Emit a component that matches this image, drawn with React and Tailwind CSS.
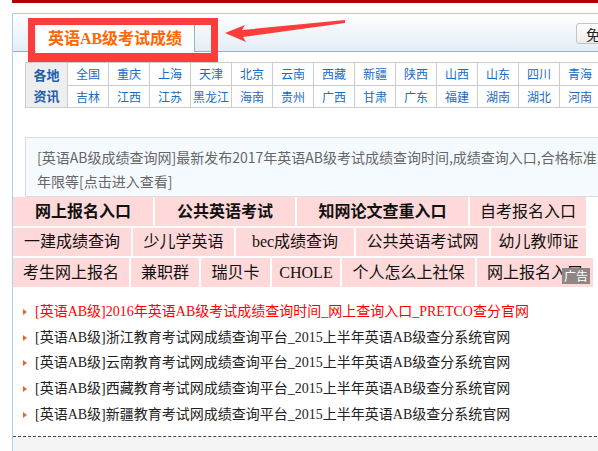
import React from "react";

const regionsTop = ["全国","重庆","上海","天津","北京","云南","西藏","新疆","陕西","山西","山东","四川","青海"];
const regionsBot = ["吉林","江西","江苏","黑龙江","海南","贵州","广西","甘肃","广东","福建","湖南","湖北","河南"];

const pinkRows = [
  { h: "h-[29px]", items: [
    { t: "网上报名入口", w: "w-[140px]", b: true },
    { t: "公共英语考试", w: "w-[140px]", b: true },
    { t: "知网论文查重入口", w: "w-[171px]", b: true },
    { t: "自考报名入口", w: "w-[116px]" },
  ]},
  { h: "h-[28px]", items: [
    { t: "一建成绩查询", w: "w-[118px]" },
    { t: "少儿学英语", w: "w-[101px]" },
    { t: "bec成绩查询", w: "w-[118px]" },
    { t: "公共英语考试网", w: "w-[133px]" },
    { t: "幼儿教师证", w: "w-[95px]" },
  ]},
  { h: "h-[29px]", items: [
    { t: "考生网上报名", w: "w-[116px]" },
    { t: "兼职群", w: "w-[68px]" },
    { t: "瑞贝卡", w: "w-[69px]" },
    { t: "CHOLE", w: "w-[68px]" },
    { t: "个人怎么上社保", w: "w-[133px]" },
    { t: "网上报名入口", w: "w-[116px]", ad: true },
  ]},
];

const listItems = [
  { t: "[英语AB级]2016年英语AB级考试成绩查询时间_网上查询入口_PRETCO查分官网", red: true },
  { t: "[英语AB级]浙江教育考试网成绩查询平台_2015上半年英语AB级查分系统官网" },
  { t: "[英语AB级]云南教育考试网成绩查询平台_2015上半年英语AB级查分系统官网" },
  { t: "[英语AB级]西藏教育考试网成绩查询平台_2015上半年英语AB级查分系统官网" },
  { t: "[英语AB级]新疆教育考试网成绩查询平台_2015上半年英语AB级查分系统官网" },
];

export default function App() {
  return (
    <div className="relative w-[598px] h-[451px] overflow-hidden bg-white font-['Liberation_Serif','Noto_Sans_CJK_SC',serif]">
      <div className="ml-[12px] h-[3px] bg-[#b40000]" />
      <div className="mt-[10px] ml-[12px] w-[640px] h-[438px] border-l border-t border-[#a9d0ef] flex flex-col">
        {/* header */}
        <div className="h-[38px] shrink-0 flex items-end border-b border-[#80b9dd] bg-gradient-to-b from-white to-[#e3ecf6]">
          <div className="ml-[23px] -mb-px h-[28px] w-[161px] bg-white border-t border-r border-[#80b9dd] flex items-center justify-center text-[16px] font-bold text-[#ff6600] leading-none">
            英语AB级考试成绩
          </div>
          <div className="ml-[381px] mb-[7px] h-[21px] px-[9px] flex items-center rounded-[3px] border border-[#c4c4c4] bg-gradient-to-b from-white to-[#ececec] text-[14px] text-[#222] font-['Noto_Sans_CJK_SC',sans-serif] leading-none whitespace-nowrap">
            免费查询
          </div>
        </div>

        {/* region grid */}
        <div className="ml-[12px] mt-[10px] w-max grid grid-cols-[42px_repeat(13,41px)] grid-rows-[23px_22px] border-l border-t border-[#cccccc] font-['Noto_Sans_CJK_SC',sans-serif]">
          <div className="row-span-2 bg-[#eeeeee] border-r border-b border-[#cccccc] flex flex-col items-center justify-around py-[1px] text-[13px] font-bold text-[#1c5fae] leading-none">
            <span>各地</span>
            <span>资讯</span>
          </div>
          {regionsTop.map((r) => (
            <div key={r} className="border-r border-b border-[#cccccc] flex items-center justify-center text-[12px] text-[#1a6bc4] leading-none">{r}</div>
          ))}
          {regionsBot.map((r) => (
            <div key={r} className="border-r border-b border-[#cccccc] flex items-center justify-center text-[12px] text-[#1a6bc4] leading-none whitespace-nowrap">{r}</div>
          ))}
        </div>

        {/* notice */}
        <div className="ml-[12px] mt-[29px] w-[700px] h-[60px] shrink-0 border border-[#dcdcdc] bg-[#f5faff] pl-[11px] pt-[7px] text-[14px] leading-[24px] text-[#666] font-['Noto_Sans_CJK_SC',sans-serif] whitespace-nowrap">
          [英语AB级成绩查询网]最新发布2017年英语AB级考试成绩查询时间,成绩查询入口,合格标准
          <br />
          年限等[点击进入查看]
        </div>

        {/* pink links */}
        <div className="flex flex-col gap-[2px]">
          {pinkRows.map((row, i) => (
            <div key={i} className={`flex gap-[2px] ${row.h}`}>
              {row.items.map((it) => (
                <div
                  key={it.t}
                  className={`relative shrink-0 ${it.w} bg-[#ffd9d9] flex items-center justify-center text-[16px] leading-none text-[#111] whitespace-nowrap ${it.b ? "font-bold" : ""}`}
                >
                  {it.t}
                  {it.ad && (
                    <span className="absolute right-[3px] top-[10px] h-[16px] w-[28px] bg-[#8e8686] text-white text-[12px] leading-[16px] text-center font-['Noto_Sans_CJK_SC',sans-serif]">
                      广告
                    </span>
                  )}
                </div>
              ))}
            </div>
          ))}
        </div>

        {/* list */}
        <div className="mt-[12px] flex flex-col">
          {listItems.map((it, i) => (
            <div key={i} className="h-[25.8px] flex items-center pl-[10px]">
              <span className="w-0 h-0 border-l-[4px] border-l-[#f0642c] border-y-[3.5px] border-y-transparent" />
              <span className={`ml-[8px] text-[14px] leading-none whitespace-nowrap ${it.red ? "text-[#ff0000]" : "text-[#222]"}`}>
                {it.t}
              </span>
            </div>
          ))}
        </div>

        <div className="mt-[8px] border-t border-dashed border-[#444]" />
        <div className="flex-1 bg-[#f4f4f4]" />
      </div>

      {/* annotation overlays */}
      <div className="absolute left-[28px] top-[18px] w-[190px] h-[44px] border-[7px] border-b-[9px] border-[#fd3c3c]" />
      <svg className="absolute left-0 top-0" width="598" height="80" viewBox="0 0 598 80">
        <polygon points="225,33 245,25 242,30 345,20 345,23 243,37 246,42" fill="#fd3c3c" />
      </svg>
    </div>
  );
}
